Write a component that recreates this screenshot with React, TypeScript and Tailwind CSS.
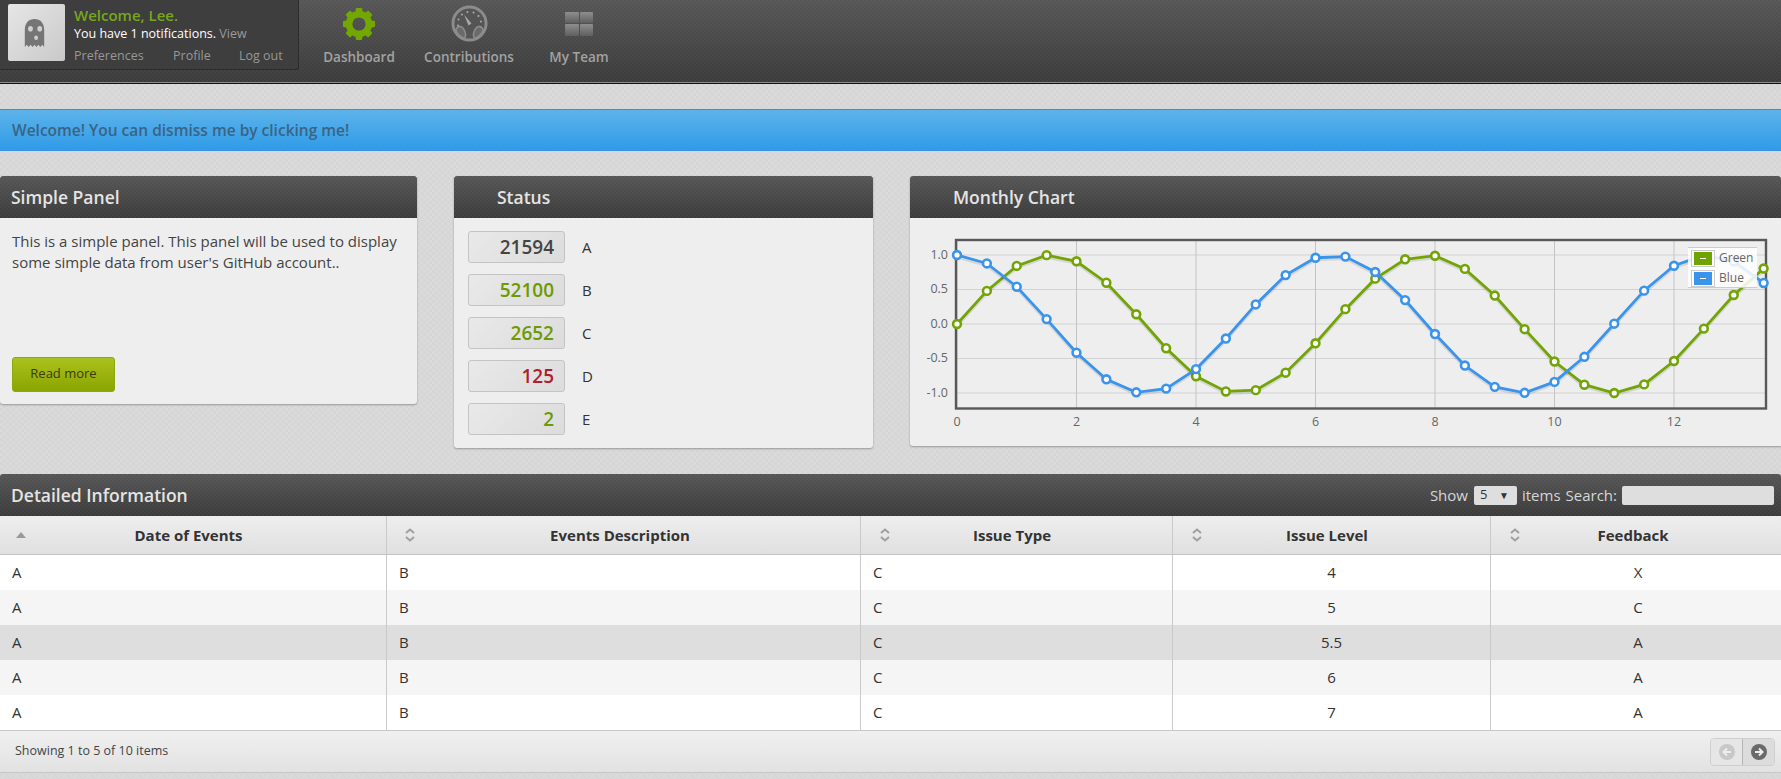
import React from "react";

const pts = Array.from({ length: 28 }, (_, i) => i * 0.5);
const px = (t: number) => 957 + 59.75 * t;
const py = (v: number) => 324 - 69 * v;
const GREEN = "#72a406";
const BLUE = "#3b94ec";

function Series({ fn, color }: { fn: (t: number) => number; color: string }) {
  const line = pts.map((t) => `${px(t)},${py(fn(t))}`).join(" ");
  return (
    <g>
      <polyline points={line} fill="none" stroke="#000" strokeOpacity={0.1} strokeWidth={3} transform="translate(0,2)" />
      <polyline points={line} fill="none" stroke={color} strokeWidth={2.8} />
      {pts.map((t) => (
        <circle key={t} cx={px(t)} cy={py(fn(t))} r={3.9} fill="#fff" stroke={color} strokeWidth={2.6} />
      ))}
    </g>
  );
}

function Chart() {
  const ys = [1, 0.5, 0, -0.5, -1];
  const xs = [0, 2, 4, 6, 8, 10, 12];
  return (
    <svg viewBox="910 218 871 228" width={871} height={228} className="block">
      {ys.map((v) => (
        <line key={v} x1={956} x2={1766} y1={py(v)} y2={py(v)} stroke="#d2d2d2" strokeWidth={1.2} />
      ))}
      {xs.map((t) => (
        <line key={t} x1={px(t)} x2={px(t)} y1={240} y2={408} stroke="#c4c4c4" strokeWidth={1} />
      ))}
      <rect x={956} y={240} width={810} height={168.5} fill="none" stroke="#585858" strokeWidth={2.4} />
      {ys.map((v) => (
        <text key={v} x={948} y={py(v) + 3.5} textAnchor="end" fontSize={12.5} fill="#666">
          {v.toFixed(1)}
        </text>
      ))}
      {xs.map((t) => (
        <text key={t} x={px(t)} y={426} textAnchor="middle" fontSize={12.5} fill="#666">
          {t}
        </text>
      ))}
      <Series fn={Math.sin} color={GREEN} />
      <Series fn={Math.cos} color={BLUE} />
    </svg>
  );
}

function LegendRow({ bg, label }: { bg: string; label: string }) {
  return (
    <div className="flex h-[20px] items-center">
      <div className="ml-[3px] flex h-[17px] w-[24px] items-center justify-center border border-[#ccc] bg-white">
        <div className={`flex h-[13px] w-[18px] items-center justify-center ${bg}`}>
          <div className="h-px w-[6px] bg-white" />
        </div>
      </div>
      <span className="ml-[4px] text-[12px] text-[#666]">{label}</span>
    </div>
  );
}

const headBg =
  "bg-[repeating-conic-gradient(rgba(255,255,255,0.025)_0_25%,transparent_0_50%),linear-gradient(#565656,#3b3b3b)] bg-[length:4px_4px,100%_100%]";

function PanelHead({ title, indent }: { title: string; indent: string }) {
  return (
    <div className={`flex h-[42px] items-center rounded-t-[3px] ${headBg} text-[17.5px] font-semibold text-[#e4e4e4] ${indent}`}>
      {title}
    </div>
  );
}

function Gear() {
  return (
    <svg width={34} height={34} viewBox="0 0 36 36">
      {[0, 45, 90, 135, 180, 225, 270, 315].map((a) => (
        <rect key={a} x={14.5} y={1} width={7} height={8} rx={1.5} fill="#73a800" transform={`rotate(${a} 18 18)`} />
      ))}
      <circle cx={18} cy={18} r={10.5} fill="none" stroke="#73a800" strokeWidth={7} />
    </svg>
  );
}

function Gauge() {
  return (
    <svg width={37} height={37} viewBox="0 0 38 38">
      <circle cx={19} cy={19} r={17} fill="#555" stroke="#8c8c8c" strokeWidth={3} />
      {[-100, -70, -40, -10, 20, 50, 80, 110].map((a) => (
        <circle key={a} cx={19} cy={7} r={1.1} fill="#a6a6a6" transform={`rotate(${a} 19 19)`} />
      ))}
      <path d="M13.5 10 L21 19 L18 21 Z" fill="#aaaaaa" />
      <path d="M5 25 C8 20 13 21 15 30 C15 33 14 34 13 34 C9 32 6 29 5 25 Z" fill="#6a6a6a" stroke="#8c8c8c" strokeWidth={1.6} />
      <path d="M33 25 C30 20 25 21 23 30 C23 33 24 34 25 34 C29 32 32 29 33 25 Z" fill="#6a6a6a" stroke="#8c8c8c" strokeWidth={1.6} />
    </svg>
  );
}

function Tiles() {
  const tile = "rounded-[1px] bg-[linear-gradient(#8e8e8e,#5f5f5f)]";
  return (
    <div className="grid h-[24px] w-[28px] grid-cols-2 grid-rows-2 gap-[1px]">
      <div className={tile} />
      <div className={tile} />
      <div className={tile} />
      <div className={tile} />
    </div>
  );
}

function Ghost() {
  return (
    <svg width={21} height={30} viewBox="0 0 26 32" preserveAspectRatio="none">
      <path
        d="M1 13 C1 5 6 1 13 1 C20 1 25 5 25 13 L25 31 L22.6 28.6 L20.2 31 L17.8 28.6 L15.4 31 L13 28.6 L10.6 31 L8.2 28.6 L5.8 31 L3.4 28.6 L1 31 Z"
        fill="#757575"
      />
      <circle cx={8} cy={11.5} r={3} fill="#cfcfcf" />
      <circle cx={19.5} cy={11.5} r={3} fill="#cfcfcf" />
      <circle cx={15} cy={21} r={2.4} fill="#cfcfcf" />
    </svg>
  );
}

function NavItem({ icon, label, w }: { icon: React.ReactNode; label: string; w: string }) {
  return (
    <div className={`flex flex-col items-center ${w}`}>
      <div className="flex h-[47px] items-center justify-center">{icon}</div>
      <div className="text-[13.5px] font-semibold leading-[20px] text-[#a2a2a2]">{label}</div>
    </div>
  );
}

function Stat({ value, label, color }: { value: string; label: string; color: string }) {
  return (
    <div className="flex h-[32px] items-center">
      <div className={`flex h-[32px] w-[97px] items-center justify-end rounded-[3px] border border-[#c4c4c4] bg-[linear-gradient(135deg,#e9e9e9,#dcdcdc)] pr-[10px] text-[19px] font-semibold ${color}`}>
        {value}
      </div>
      <div className="ml-[17px] text-[15px] text-[#333]">{label}</div>
    </div>
  );
}

function Sort({ asc }: { asc?: boolean }) {
  if (asc) {
    return (
      <svg width={10} height={6} viewBox="0 0 10 6">
        <path d="M5 0 L10 6 L0 6 Z" fill="#9a9a9a" />
      </svg>
    );
  }
  return (
    <svg width={10} height={14} viewBox="0 0 10 14" fill="none" stroke="#a0a0a0" strokeWidth={2}>
      <path d="M1 5 L5 1.5 L9 5" />
      <path d="M1 9 L5 12.5 L9 9" />
    </svg>
  );
}

const cols = [
  { w: "w-[387px]", title: "Date of Events", ml: "ml-[16px]", pr: "pr-[35px]", align: "text-left", v: (_: number) => "A" },
  { w: "w-[474px]", title: "Events Description", ml: "ml-[18px]", pr: "pr-[35px]", align: "text-left", v: (_: number) => "B" },
  { w: "w-[312px]", title: "Issue Type", ml: "ml-[19px]", pr: "pr-[38px]", align: "text-left", v: (_: number) => "C" },
  { w: "w-[318px]", title: "Issue Level", ml: "ml-[19px]", pr: "pr-[38px]", align: "text-center", v: (i: number) => ["4", "5", "5.5", "6", "7"][i] },
  { w: "w-[290px]", title: "Feedback", ml: "ml-[19px]", pr: "pr-[35px]", align: "pl-[4px] text-center", v: (i: number) => ["X", "C", "A", "A", "A"][i] },
];

const rowBg = ["bg-white", "bg-[#f5f5f5]", "bg-[#dedede]", "bg-[#f5f5f5]", "bg-white"];

function Table() {
  return (
    <div>
      <div className="flex h-[39px] border-b border-[#c4c4c4] bg-[linear-gradient(#eeeeee,#e0e0e0)]">
        {cols.map((c, i) => (
          <div key={c.title} className={`flex items-center ${c.w} ${i < 4 ? "border-r border-[#cacaca]" : ""}`}>
            <div className={`flex w-[10px] shrink-0 justify-center ${c.ml}`}>
              <Sort asc={i === 0} />
            </div>
            <div className={`flex-1 text-center text-[15px] font-bold text-[#333] ${c.pr}`}>{c.title}</div>
          </div>
        ))}
      </div>
      {rowBg.map((bg, r) => (
        <div key={r} className={`flex h-[35px] ${bg}`}>
          {cols.map((c, i) => (
            <div key={c.title} className={`flex items-center ${c.w} px-[12px] text-[15px] text-[#333] ${i < 4 ? "border-r border-[#cacaca]" : ""}`}>
              <div className={`w-full ${c.align}`}>{c.v(r)}</div>
            </div>
          ))}
        </div>
      ))}
    </div>
  );
}

function Pager() {
  return (
    <div className="flex h-[28px] w-[65px] overflow-hidden rounded-[4px] border border-[#cfcfcf]">
      <div className="flex flex-1 items-center justify-center bg-[#e6e6e6]">
        <svg width={16} height={16} viewBox="0 0 16 16">
          <circle cx={8} cy={8} r={8} fill="#c8c8c8" />
          <path d="M12 8 H5 M8 4.5 L4.5 8 L8 11.5" stroke="#eee" strokeWidth={2} fill="none" />
        </svg>
      </div>
      <div className="flex flex-1 items-center justify-center border-l border-[#b4b4b4] bg-[#dcdcdc]">
        <svg width={16} height={16} viewBox="0 0 16 16">
          <circle cx={8} cy={8} r={8} fill="#6a6a6a" />
          <path d="M4 8 H11 M8 4.5 L11.5 8 L8 11.5" stroke="#eee" strokeWidth={2} fill="none" />
        </svg>
      </div>
    </div>
  );
}

export default function App() {
  return (
    <div className="relative h-[779px] w-[1781px] overflow-hidden bg-[repeating-conic-gradient(#dadada_0_25%,#d6d6d6_0_50%)] bg-[length:6px_6px] font-['Open_Sans',sans-serif]">
      {/* top bar */}
      <header className={`flex h-[84px] border-b border-[#111] shadow-[inset_0_-1px_0_#8c8c8c] ${headBg}`}>
        <div className="flex h-[70px] w-[299px] shrink-0 rounded-br-[3px] border-r border-b border-[#2c2c2c] bg-[#3e3e3e] pl-[8px] pt-[4px]">
          <div className="flex h-[57px] w-[57px] items-center justify-center rounded-[2px] bg-[linear-gradient(135deg,#e6e6e6,#c9c9c9)] pr-[5px]">
            <Ghost />
          </div>
          <div className="ml-[9px] flex flex-col">
            <div className="text-[15px] font-semibold leading-[22px] text-[#76a71a]">Welcome, Lee.</div>
            <div className="text-[12.5px] leading-[16px] text-white">
              You have 1 notifications. <span className="text-[#9a9a9a]">View</span>
            </div>
            <div className="mt-[4px] flex text-[12.5px] leading-[20px] text-[#979797]">
              <span className="w-[99px]">Preferences</span>
              <span className="w-[66px]">Profile</span>
              <span>Log out</span>
            </div>
          </div>
        </div>
        <nav className="ml-[15px] flex">
          <NavItem icon={<Gear />} label="Dashboard" w="w-[90px]" />
          <NavItem icon={<Gauge />} label="Contributions" w="w-[130px]" />
          <NavItem icon={<Tiles />} label="My Team" w="w-[90px]" />
        </nav>
      </header>

      {/* alert */}
      <div className="mt-[25px] flex h-[42px] items-center border-y border-t-[#5a82c4] border-b-[#3a94e0] bg-[linear-gradient(#5db3ea,#2f9be8)] pl-[12px] pt-[2px] text-[15.5px] font-semibold text-[#3a6484]">
        Welcome! You can dismiss me by clicking me!
      </div>

      {/* panels */}
      <div className="mt-[25px] flex items-start">
        <section className="w-[417px] shrink-0 rounded-b-[3px] bg-[#eeeeee] shadow-[0_1px_2px_rgba(0,0,0,0.3)]">
          <PanelHead title="Simple Panel" indent="pl-[11px]" />
          <div className="flex h-[186px] flex-col justify-between px-[12px] pb-[12px] pt-[13px]">
            <p className="text-[15px] leading-[21px] text-[#444]">
              This is a simple panel. This panel will be used to display some simple data from user's GitHub account..
            </p>
            <button className="h-[35px] w-[103px] rounded-[3px] border border-[#8fa60f] bg-[linear-gradient(#abc21e,#8aa400)] pb-[2px] text-[13px] text-[#3c3c10]">
              Read more
            </button>
          </div>
        </section>

        <section className="ml-[37px] w-[419px] shrink-0 rounded-b-[3px] bg-[#eeeeee] shadow-[0_1px_2px_rgba(0,0,0,0.3)]">
          <PanelHead title="Status" indent="pl-[43px]" />
          <div className="flex h-[230px] flex-col gap-[11px] pl-[14px] pt-[13px]">
            <Stat value="21594" label="A" color="text-[#444]" />
            <Stat value="52100" label="B" color="text-[#6f9a00]" />
            <Stat value="2652" label="C" color="text-[#6f9a00]" />
            <Stat value="125" label="D" color="text-[#b0202c]" />
            <Stat value="2" label="E" color="text-[#6f9a00]" />
          </div>
        </section>

        <section className="ml-[37px] flex-1 rounded-tl-[3px] rounded-bl-[3px] bg-[#eeeeee] shadow-[0_1px_2px_rgba(0,0,0,0.3)]">
          <PanelHead title="Monthly Chart" indent="pl-[43px]" />
          <div className="relative h-[228px]">
            <Chart />
            <div className="absolute left-[778px] top-[29px] h-[41px] w-[69px] border-y border-[#ccc] bg-white/85">
              <LegendRow bg="bg-[#6fa300]" label="Green" />
              <LegendRow bg="bg-[#3b94ec]" label="Blue" />
            </div>
          </div>
        </section>
      </div>

      {/* table */}
      <section className="mt-[26px]">
        <div className={`flex h-[42px] items-center justify-between rounded-t-[3px] ${headBg} pl-[11px] pr-[7px]`}>
          <div className="text-[17.5px] font-semibold text-[#e4e4e4]">Detailed Information</div>
          <div className="flex items-center text-[15px] text-[#d6d6d6]">
            <span>Show</span>
            <div className="ml-[6px] flex h-[19px] w-[43px] items-center justify-between rounded-[2px] bg-[#dedede] pl-[6px] pr-[8px] text-[13px] text-[#333]">
              <span>5</span>
              <span className="text-[10px]">▼</span>
            </div>
            <span className="ml-[5px]">items</span>
            <span className="ml-[5px]">Search:</span>
            <div className="ml-[5px] h-[19px] w-[152px] rounded-[2px] bg-[#dedede]" />
          </div>
        </div>
        <Table />
        <div className="flex h-[43px] items-center justify-between border-t border-b border-t-[#c8c8c8] border-b-[#c6c6c6] bg-[linear-gradient(#f0f0f0,#e2e2e2)] pl-[15px] pr-[6px]">
          <span className="text-[12.5px] text-[#444]">Showing 1 to 5 of 10 items</span>
          <Pager />
        </div>
      </section>
    </div>
  );
}
